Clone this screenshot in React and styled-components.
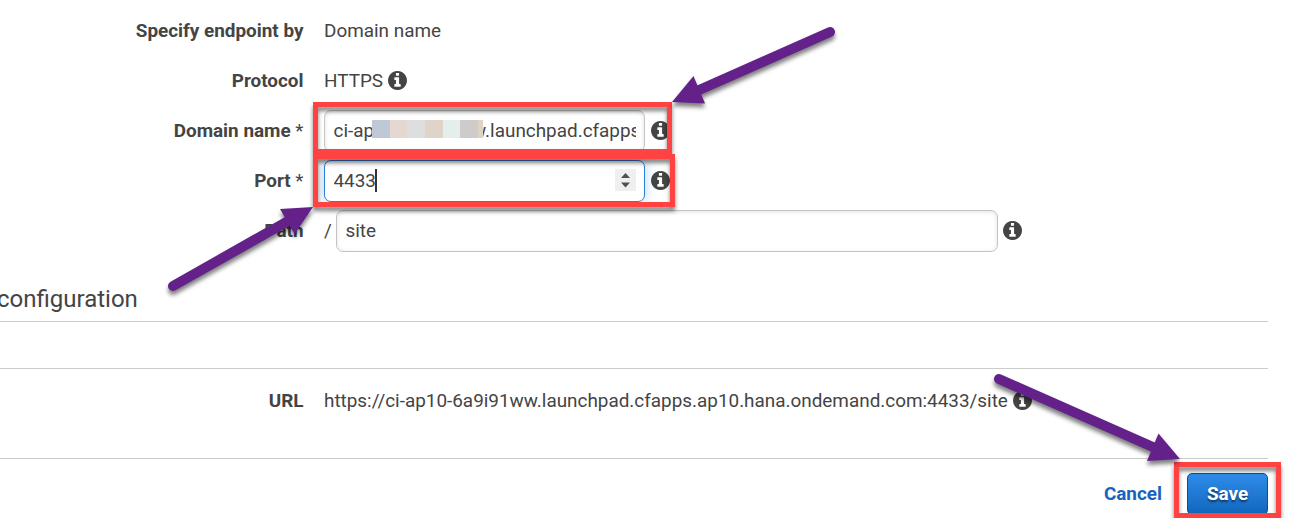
import React from "react";
import styled, { createGlobalStyle } from "styled-components";

const GlobalStyle = createGlobalStyle`
  *, *::before, *::after { box-sizing: border-box; }
  body {
    margin: 0;
    background: #fff;
    color: #444;
    font-family: Roboto, "Liberation Sans", sans-serif;
    font-size: 18.9px;
  }
`;

const Page = styled.main`
  position: relative;
  height: 518px;
  overflow: hidden;
`;

const Fields = styled.section`
  padding-top: 5px;
`;

const Row = styled.div`
  display: grid;
  grid-template-columns: 303.5px 1fr;
  column-gap: 20.5px;
  align-items: center;
  height: 50px;
`;

const Label = styled.label`
  padding-top: 2px;
  text-align: right;
  font-weight: 700;
  line-height: 22px;
  white-space: nowrap;
`;

const Required = styled.span`
  font-weight: 400;
`;

const Value = styled.div`
  display: flex;
  align-items: center;
  gap: ${(p) => p.$gap ?? 5}px;
  line-height: 22px;
  white-space: nowrap;
`;

const Text = styled.span`
  padding-top: 2px;
`;

const Slash = styled(Text)`
  width: 7px;
`;

const InfoSvg = styled.svg`
  flex: none;
  width: 19px;
  height: 19px;
  margin-top: 1px;
  fill: #444;
`;

const InfoIcon = () => (
  <InfoSvg viewBox="128 128 1536 1536">
    <path d="M1152 1376v-160q0-14-9-23t-23-9h-96v-512q0-14-9-23t-23-9h-320q-14 0-23 9t-9 23v160q0 14 9 23t23 9h96v320h-96q-14 0-23 9t-9 23v160q0 14 9 23t23 9h448q14 0 23-9t9-23zM1024 480v-160q0-14-9-23t-23-9h-192q-14 0-23 9t-9 23v160q0 14 9 23t23 9h192q14 0 23-9t9-23zM1664 896q0 209-103 385.500t-279.500 279.500-385.500 103-385.500-103-279.500-279.500-103-385.500 103-385.500 279.500-279.500 385.500-103 385.500 103 279.500 279.500 103 385.500z" />
  </InfoSvg>
);

const Field = styled.div`
  position: relative;
  display: flex;
  align-items: center;
  width: ${(p) => p.$width}px;
  height: 42px;
  margin-top: 1px;
  padding: 0 8px 0 8.5px;
  border: 1px solid ${(p) => (p.$focused ? "#2a7fd8" : "#c4c4c4")};
  border-radius: 7px;
  background: #fff;
  box-shadow: ${(p) =>
    p.$focused ? "0 0 12px rgba(42, 127, 216, 0.35)" : "inset 0 1px 4px rgba(0, 0, 0, 0.12)"};
`;

const FieldText = styled.span`
  flex: ${(p) => (p.$fill ? "1" : "none")};
  overflow: hidden;
`;

const Caret = styled.span`
  width: 2px;
  height: 23px;
  margin-left: -1px;
  background: #333;
`;

const Stepper = styled.svg`
  width: 21px;
  height: 22px;
  margin: -1px 0 0 auto;
  background: #efefef;
`;

const Mosaic = styled.span`
  position: absolute;
  left: 47px;
  top: 9px;
  display: flex;
  width: 111px;
  height: 18px;
  overflow: hidden;
`;

const Tile = styled.span`
  flex: 0 0 17.7px;
  background: ${(p) => p.$color};
`;

const Heading = styled.h2`
  width: 1268px;
  height: 67px;
  margin: 0;
  padding-top: 29px;
  border-bottom: 1px solid #ccc;
  font-size: 24px;
  font-weight: 400;
  line-height: 30px;
  text-indent: -3px;
`;

const Summary = styled.section`
  width: 1268px;
  height: 91px;
  margin-top: 46px;
  padding-top: 6px;
  border-top: 1px solid #ccc;
  border-bottom: 1px solid #ccc;
`;

const Actions = styled.footer`
  display: flex;
  justify-content: flex-end;
  align-items: center;
  gap: 25px;
  width: 1268px;
  padding-top: 14px;
`;

const Cancel = styled.a`
  padding-bottom: 2px;
  color: #1763be;
  font-weight: 700;
`;

const Save = styled.button`
  width: 81px;
  height: 42px;
  padding: 0 0 2px;
  border: 1px solid #0f4d94;
  border-radius: 5px;
  background: linear-gradient(#2f8ceb, #1166bb);
  color: #fff;
  font: inherit;
  font-weight: 700;
  text-shadow: 0 2px 2px rgba(0, 0, 0, 0.5);
`;

const Annotations = styled.svg`
  position: absolute;
  inset: 0;
  width: 1307px;
  height: 518px;
  pointer-events: none;
`;

const tiles = ["#bfc8d4", "#e4d8d0", "#dedede", "#e0d3c8", "#e4efeb", "#cecccb", "#e0d3c4"];

const Arrow = ({ line, head }) => (
  <g fill="#632189" stroke="none" filter="url(#shadow)">
    <path d={line} stroke="#632189" strokeWidth="10" strokeLinecap="round" />
    <polygon points={head} />
  </g>
);

const Frame = (props) => (
  <rect {...props} fill="none" stroke="#ff4343" strokeWidth="5" filter="url(#shadow)" />
);

export default function App() {
  return (
    <Page>
      <GlobalStyle />
      <Fields>
        <Row>
          <Label>Specify endpoint by</Label>
          <Value><Text>Domain name</Text></Value>
        </Row>
        <Row>
          <Label>Protocol</Label>
          <Value><Text>HTTPS</Text><InfoIcon /></Value>
        </Row>
        <Row>
          <Label>Domain name <Required>*</Required></Label>
          <Value $gap={6}>
            <Field $width={321}>
              <FieldText $fill>ci-ap10-6a9i91ww.launchpad.cfapps</FieldText>
              <Mosaic>{tiles.map((c) => <Tile key={c} $color={c} />)}</Mosaic>
            </Field>
            <InfoIcon />
          </Value>
        </Row>
        <Row>
          <Label>Port <Required>*</Required></Label>
          <Value $gap={6}>
            <Field $width={321} $focused>
              <FieldText>4433</FieldText>
              <Caret />
              <Stepper viewBox="0 0 21 22">
                <path d="M6 9l4.500-5L15 9zM6 13.500l4.500 5 4.500-5z" fill="#505050" />
              </Stepper>
            </Field>
            <InfoIcon />
          </Value>
        </Row>
        <Row>
          <Label>Path</Label>
          <Value>
            <Slash>/</Slash>
            <Field $width={662}><FieldText>site</FieldText></Field>
            <InfoIcon />
          </Value>
        </Row>
      </Fields>
      <Heading>configuration</Heading>
      <Summary>
        <Row>
          <Label>URL</Label>
          <Value>
            <Text>https://ci-ap10-6a9i91ww.launchpad.cfapps.ap10.hana.ondemand.com:4433/site</Text>
            <InfoIcon />
          </Value>
        </Row>
      </Summary>
      <Actions>
        <Cancel>Cancel</Cancel>
        <Save>Save</Save>
      </Actions>
      <Annotations viewBox="0 0 1307 518">
        <defs>
          <filter id="shadow" filterUnits="userSpaceOnUse" x="0" y="0" width="1307" height="518" colorInterpolationFilters="sRGB">
            <feDropShadow dx="0" dy="4" stdDeviation="2.2" floodColor="#000" floodOpacity="0.5" />
          </filter>
        </defs>
        <Frame x="315.500" y="104.500" width="354" height="47" />
        <Frame x="315.500" y="156.500" width="357" height="48" />
        <Frame x="1176.500" y="464.500" width="102" height="51" />
        <Arrow line="M830 32L698 90.500" head="672,102 693.500,76 705,103.500" />
        <Arrow line="M173 286L288 221" head="313,207 280,209 294.500,234" />
        <Arrow line="M999 379L1154 447.500" head="1180,459 1158.500,433.500 1147,461" />
      </Annotations>
    </Page>
  );
}
